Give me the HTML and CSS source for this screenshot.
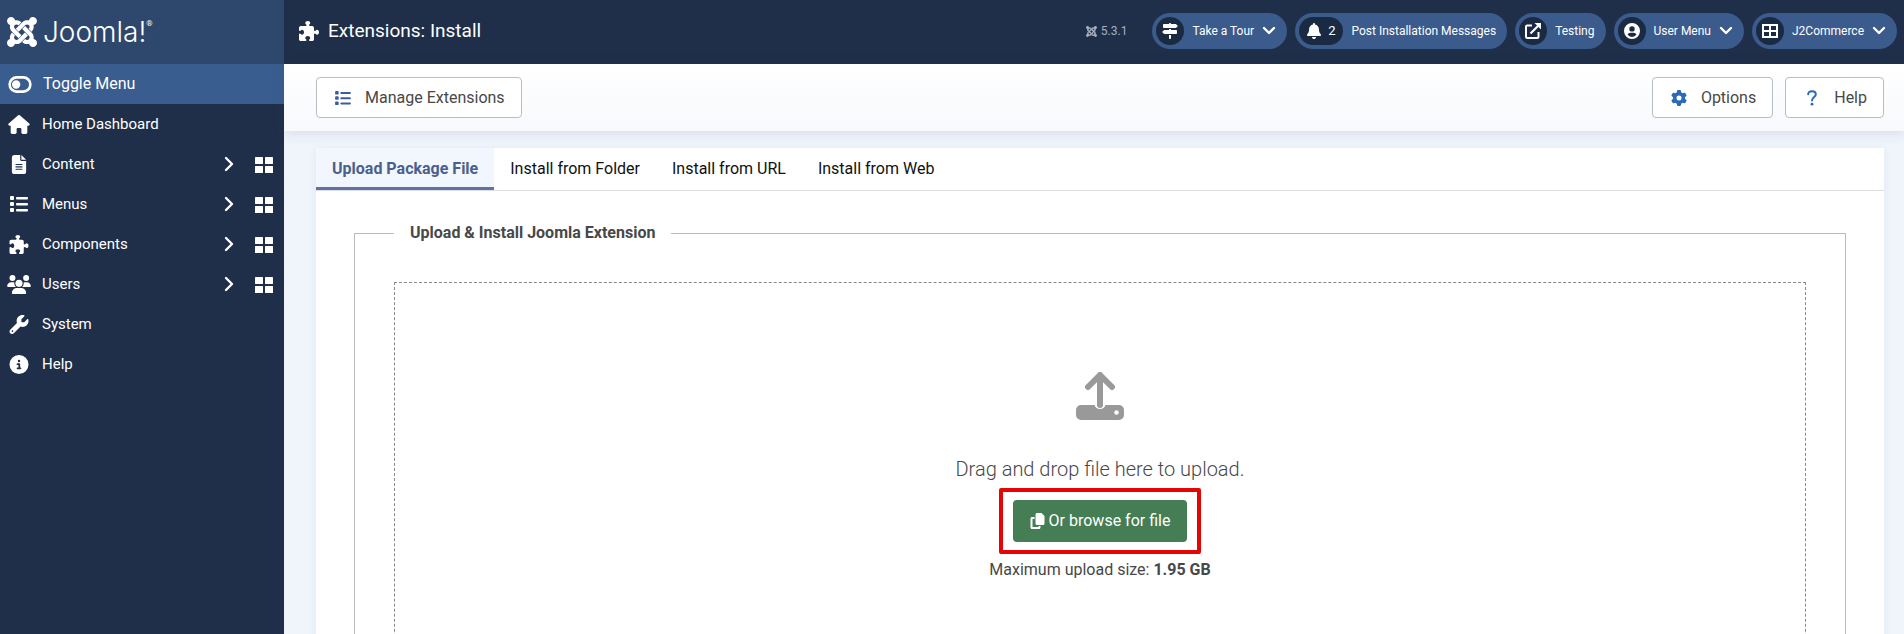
FILE: index.html
```html
<!DOCTYPE html>
<html lang="en">
<head>
<meta charset="utf-8">
<meta name="viewport" content="width=device-width, initial-scale=1">
<title>Extensions: Install</title>
<link rel="stylesheet" href="styles.css">
</head>
<body>
<svg class="sprite" aria-hidden="true">
  <symbol id="joomla" viewBox="0 32 448 448"><path d="M.6 92.1C.6 58.8 27.4 32 60.4 32c30 0 54.5 21.9 59.2 50.2 32.6-7.6 67.1.6 96.5 30l-44.3 44.3c-20.5-20.5-42.6-16.3-55.4-3.5-14.3 14.3-14.3 37.9 0 52.2l99.5 99.5-44 44.3c-87.7-87.2-49.7-49.7-99.8-99.7-26.8-26.5-35-64.8-24.8-98.9C20.4 144.6.6 120.7.6 92.1zm129.5 116.4l44.3 44.3c10-10 89.7-89.7 99.7-99.8 14.3-14.3 37.6-14.3 51.9 0 12.8 12.8 17 35-3.5 55.4l44 44.3c31.2-31.2 38.5-67.6 28.9-101.2 29.2-4.1 51.9-29.2 51.9-59.5 0-33.2-26.8-60.1-59.8-60.1-30.3 0-55.4 22.5-59.5 51.6-33.8-9.9-71.7-1.5-98.3 25.1-18.3 19.1-71.1 71.5-99.6 99.9zm266.3 152.2c8.2-32.7-.9-68.5-26.3-93.9-11.8-12.2 5 4.7-99.5-99.7l-44.3 44.3 99.7 99.7c14.3 14.3 14.3 37.6 0 51.9-12.8 12.8-35 17-55.4-3.5l-44 44.3c27.6 30.2 68 38.8 102.7 28 5.5 27.4 29.7 48.1 58.9 48.1 33 0 59.8-26.8 59.8-60.1 0-30.2-22.5-55-51.6-59.1zm-84.3-53.1l-44-44.3c-87 86.4-50.4 50.4-99.7 99.8-14.3 14.3-37.6 14.3-51.9 0-13.1-13.4-16.9-35.3 3.2-55.4l-44-44.3c-30.2 30.2-38 65.2-29.5 98.3-26.7 6-46.2 29.9-46.2 58.2C0 453.2 26.8 480 59.8 480c28.6 0 52.5-19.8 58.6-46.7 32.7 8.2 68.5-.6 94.2-26 32.1-32 12.2-12.4 99.5-99.7z"/></symbol>
  <symbol id="puzzle" viewBox="0 0 512 512"><path d="M192 104.8c0-9.2-5.8-17.3-13.2-22.8C167.2 73.3 160 61.3 160 48c0-26.5 28.7-48 64-48s64 21.5 64 48c0 13.3-7.2 25.3-18.8 34c-7.4 5.5-13.2 13.6-13.2 22.8c0 12.8 10.4 23.2 23.2 23.2H336c26.5 0 48 21.5 48 48v56.8c0 12.8 10.4 23.2 23.2 23.2c9.2 0 17.3-5.8 22.8-13.2c8.7-11.6 20.7-18.8 34-18.8c26.5 0 48 28.7 48 64s-21.5 64-48 64c-13.3 0-25.3-7.2-34-18.8c-5.5-7.4-13.6-13.2-22.8-13.2c-12.8 0-23.2 10.4-23.2 23.2V464c0 26.5-21.5 48-48 48H279.2c-12.8 0-23.2-10.4-23.2-23.2c0-9.2 5.8-17.3 13.2-22.8c11.6-8.7 18.8-20.7 18.8-34c0-26.5-28.7-48-64-48s-64 21.5-64 48c0 13.3 7.2 25.3 18.8 34c7.4 5.5 13.2 13.6 13.2 22.8c0 12.8-10.4 23.2-23.2 23.2H48c-26.5 0-48-21.5-48-48V343.2C0 330.4 10.4 320 23.2 320c9.2 0 17.3 5.8 22.8 13.2C54.7 344.8 66.7 352 80 352c26.5 0 48-28.7 48-64s-21.5-64-48-64c-13.3 0-25.3 7.2-34 18.8C40.5 250.2 32.4 256 23.2 256C10.4 256 0 245.6 0 232.8V176c0-26.5 21.5-48 48-48H168.8c12.8 0 23.2-10.4 23.2-23.2z"/></symbol>
  <symbol id="toggle" viewBox="0 0 22 16"><rect x="1.5" y="1.5" width="19" height="13" rx="6.5" fill="none" stroke="currentColor" stroke-width="2.4"/><circle cx="7.5" cy="8" r="3.8"/></symbol>
  <symbol id="home" viewBox="0 0 576 512"><path d="M575.8 255.5c0 18-15 32.1-32 32.1h-32l.7 160.2c0 2.7-.2 5.4-.5 8.1V472c0 22.1-17.9 40-40 40H392c-22.1 0-40-17.9-40-40V384c0-17.7-14.3-32-32-32H256c-17.7 0-32 14.3-32 32v88c0 22.1-17.9 40-40 40H104c-22.1 0-40-17.9-40-40V287.6H32c-18 0-32-14-32-32.1c0-9 3-17 10-24L266.4 8c7-7 15-8 22-8s15 2 21 7L564.8 231.5c8 7 12 15 11 24z"/></symbol>
  <symbol id="file" viewBox="0 0 384 512"><path d="M64 0C28.700 0 0 28.700 0 64V448c0 35.300 28.700 64 64 64H320c35.300 0 64-28.700 64-64V160H256c-17.700 0-32-14.300-32-32V0H64zM256 0V128H384L256 0zM112 240H272a16 16 0 0 1 0 32H112a16 16 0 0 1 0-32zm0 64H272a16 16 0 0 1 0 32H112a16 16 0 0 1 0-32zm0 64H272a16 16 0 0 1 0 32H112a16 16 0 0 1 0-32z"/></symbol>
  <symbol id="list" viewBox="0 0 18 16"><rect width="4" height="4" rx="1"/><rect y="6" width="4" height="4" rx="1"/><rect y="12" width="4" height="4" rx="1"/><rect x="6" y="1" width="12" height="2.400" rx="1"/><rect x="6" y="7" width="12" height="2.400" rx="1"/><rect x="6" y="13" width="12" height="2.400" rx="1"/></symbol>
  <symbol id="users" viewBox="0 0 640 512"><circle cx="144" cy="80" r="80"/><circle cx="512" cy="80" r="80"/><path d="M0 298.700C0 239.800 47.800 192 106.700 192h42.700c15.900 0 31 3.500 44.600 9.700A130 130 0 0 0 235.200 320H21.300C9.600 320 0 310.400 0 298.700zM405.300 320A130 130 0 0 0 446 201.700c13.600-6.300 28.700-9.700 44.600-9.700h42.700C592.200 192 640 239.800 640 298.700c0 11.800-9.600 21.300-21.300 21.300z"/><circle cx="320" cy="224" r="96"/><path d="M128 485.300C128 411.700 187.700 352 261.300 352h117.400C452.300 352 512 411.700 512 485.300c0 14.700-11.900 26.700-26.700 26.700H154.700C140 512 128 500.100 128 485.300z"/></symbol>
  <symbol id="wrench" viewBox="0 0 512 512"><path d="M352 320c88.400 0 160-71.600 160-160c0-15.300-2.200-30.100-6.200-44.200c-3.100-10.800-16.400-13.200-24.300-5.300l-76.800 76.800c-3 3-7.100 4.700-11.300 4.700H336c-8.800 0-16-7.200-16-16V118.600c0-4.200 1.700-8.300 4.700-11.300l76.800-76.800c7.900-7.900 5.400-21.200-5.300-24.300C382.100 2.200 367.300 0 352 0C263.600 0 192 71.600 192 160c0 19.100 3.400 37.500 9.500 54.500L19.900 396.100C7.200 408.800 0 426.100 0 444.100C0 481.600 30.400 512 67.900 512c18 0 35.300-7.200 48-19.900L297.500 310.500c17 6.200 35.400 9.500 54.500 9.500zM80 408a24 24 0 1 1 0 48 24 24 0 1 1 0-48z"/></symbol>
  <symbol id="info" viewBox="0 0 512 512"><path d="M256 512A256 256 0 1 0 256 0a256 256 0 1 0 0 512zM216 336h24V272H216c-13.300 0-24-10.700-24-24s10.700-24 24-24h48c13.300 0 24 10.700 24 24v88h8c13.300 0 24 10.700 24 24s-10.700 24-24 24H216c-13.300 0-24-10.700-24-24s10.700-24 24-24zm40-208a32 32 0 1 1 0 64 32 32 0 1 1 0-64z"/></symbol>
  <symbol id="right" viewBox="0 0 10 16"><path d="M2 2l6 6-6 6" fill="none" stroke="currentColor" stroke-width="2.400" stroke-linecap="round" stroke-linejoin="round"/></symbol>
  <symbol id="down" viewBox="0 0 14 10"><path d="M2 2l5 5 5-5" fill="none" stroke="currentColor" stroke-width="2.400" stroke-linecap="round" stroke-linejoin="round"/></symbol>
  <symbol id="grid" viewBox="0 0 18 16"><rect width="8" height="7" rx=".5"/><rect x="10" width="8" height="7" rx=".5"/><rect y="9" width="8" height="7" rx=".5"/><rect x="10" y="9" width="8" height="7" rx=".5"/></symbol>
  <symbol id="signs" viewBox="0 0 512 512"><path d="M224 32H64C46.300 32 32 46.300 32 64v64c0 17.700 14.300 32 32 32H441.400c4.200 0 8.300-1.700 11.300-4.700l48-48c6.200-6.200 6.200-16.400 0-22.600l-48-48c-3-3-7.100-4.700-11.300-4.700H288c0-17.700-14.300-32-32-32s-32 14.300-32 32zM480 256c0-17.700-14.300-32-32-32H288V192H224v32H70.600c-4.200 0-8.300 1.700-11.300 4.700l-48 48c-6.200 6.200-6.200 16.400 0 22.600l48 48c3 3 7.100 4.700 11.300 4.700H448c17.700 0 32-14.300 32-32V256zM288 480V384H224v96c0 17.700 14.300 32 32 32s32-14.300 32-32z"/></symbol>
  <symbol id="bell" viewBox="0 0 448 512"><path d="M224 0c-17.700 0-32 14.300-32 32V51.200C119 66 64 130.600 64 208v18.800c0 47-17.300 92.400-48.500 127.600l-7.400 8.300c-8.400 9.400-10.400 22.900-5.300 34.400S19.400 416 32 416H416c12.600 0 24-7.400 29.200-18.900s3.100-25-5.300-34.400l-7.400-8.300C401.300 319.200 384 273.900 384 226.800V208c0-77.400-55-142-128-156.800V32c0-17.700-14.300-32-32-32zm45.300 493.300c12-12 18.700-28.300 18.700-45.300H160c0 17 6.700 33.300 18.700 45.300s28.300 18.700 45.300 18.700s33.300-6.700 45.300-18.700z"/></symbol>
  <symbol id="external" viewBox="0 0 16 16"><path d="M7 2.500H2.200Q1 2.500 1 3.700v10.100Q1 15 2.200 15h10.100q1.200 0 1.200-1.200V9" fill="none" stroke="currentColor" stroke-width="2"/><path d="M5.500 10.500L13 3" fill="none" stroke="currentColor" stroke-width="2.200"/><path d="M9.500 0H16v6.500z"/></symbol>
  <symbol id="user" viewBox="0 0 16 16"><path fill-rule="evenodd" d="M8 0a8 8 0 1 1 0 16A8 8 0 0 1 8 0zm0 3.200a2.700 2.700 0 1 0 0 5.400 2.700 2.700 0 0 0 0-5.400zM3.500 11.600Q5 14 8 14t4.500-2.400Q11.500 9.700 9.800 9.700H6.200Q4.500 9.700 3.500 11.600z"/></symbol>
  <symbol id="table" viewBox="0 0 16 14"><path d="M1 1h14v12H1zM8 1v12M1 7h14" fill="none" stroke="currentColor" stroke-width="2"/></symbol>
  <symbol id="cog" viewBox="0 0 512 512"><path d="M495.900 166.600c3.200 8.700 .5 18.400-6.400 24.600l-43.300 39.400c1.100 8.300 1.700 16.800 1.700 25.400s-.6 17.100-1.700 25.400l43.300 39.400c6.900 6.200 9.600 15.900 6.400 24.600c-4.400 11.900-9.700 23.300-15.800 34.300l-4.700 8.100c-6.600 11-14 21.400-22.100 31.200c-5.900 7.200-15.700 9.600-24.500 6.800l-55.700-17.700c-13.400 10.300-28.200 18.900-44 25.400l-12.500 57.100c-2 9.100-9 16.300-18.200 17.800c-13.800 2.300-28 3.500-42.500 3.500s-28.700-1.200-42.500-3.500c-9.200-1.500-16.200-8.700-18.200-17.800l-12.500-57.100c-15.800-6.500-30.600-15.100-44-25.400L83.100 425.900c-8.800 2.800-18.600 .3-24.500-6.800c-8.100-9.800-15.500-20.200-22.100-31.200l-4.700-8.100c-6.100-11-11.400-22.400-15.800-34.300c-3.200-8.700-.5-18.400 6.400-24.600l43.300-39.400C64.600 273.100 64 264.600 64 256s.6-17.100 1.700-25.400L22.400 191.200c-6.900-6.200-9.600-15.900-6.400-24.600c4.400-11.900 9.700-23.300 15.800-34.300l4.700-8.100c6.600-11 14-21.400 22.100-31.200c5.900-7.200 15.700-9.600 24.500-6.800l55.700 17.700c13.400-10.300 28.200-18.900 44-25.400l12.500-57.100c2-9.100 9-16.300 18.200-17.800C227.300 1.200 241.500 0 256 0s28.700 1.200 42.500 3.500c9.200 1.500 16.200 8.700 18.200 17.800l12.500 57.100c15.800 6.500 30.600 15.100 44 25.400l55.700-17.700c8.800-2.800 18.600-.3 24.500 6.800c8.100 9.800 15.500 20.200 22.100 31.200l4.700 8.100c6.100 11 11.400 22.400 15.800 34.300zM256 336a80 80 0 1 0 0-160 80 80 0 1 0 0 160z"/></symbol>
  <symbol id="question" viewBox="0 0 10 16"><path d="M1.200 4.200C1.200 2.300 2.700 1.200 5 1.200S8.800 2.400 8.800 4.400C8.800 7 5 7 5 10.500" fill="none" stroke="currentColor" stroke-width="2" stroke-linecap="round"/><circle cx="5" cy="14.200" r="1.400"/></symbol>
  <symbol id="upload" viewBox="0 0 48 48"><path d="M5 33h13.500a5.800 5.800 0 0 0 11 0H43a5 5 0 0 1 5 5v5a5 5 0 0 1-5 5H5a5 5 0 0 1-5-5v-5a5 5 0 0 1 5-5zm35.500 5.200a2.300 2.300 0 1 0 0 4.600 2.300 2.300 0 0 0 0-4.600z"/><path d="M24 33V3M12 15L24 3l12 12" fill="none" stroke="currentColor" stroke-width="6" stroke-linecap="round" stroke-linejoin="round"/></symbol>
  <symbol id="copy" viewBox="0 0 448 512"><path d="M208 0H332.100c12.700 0 24.900 5.100 33.900 14.100l67.900 67.900c9 9 14.100 21.200 14.100 33.900V336c0 26.500-21.500 48-48 48H208c-26.500 0-48-21.500-48-48V48c0-26.500 21.500-48 48-48zM48 128h80v64H64V448H256V416h64v48c0 26.500-21.500 48-48 48H48c-26.500 0-48-21.500-48-48V176c0-26.500 21.500-48 48-48z"/></symbol>
</svg>

<div class="app">
  <aside class="sidebar">
    <a class="logo" href="#"><svg class="logo-mark"><use href="#joomla"/></svg><span class="wordmark">Joomla!</span><span class="reg">®</span></a>
    <button class="toggle" type="button"><svg class="menu-icon"><use href="#toggle"/></svg>Toggle Menu</button>
    <nav class="menu">
      <div class="item"><a class="link" href="#"><svg class="menu-icon"><use href="#home"/></svg>Home Dashboard</a></div>
      <div class="item"><a class="link" href="#"><svg class="menu-icon"><use href="#file"/></svg>Content<svg class="arrow"><use href="#right"/></svg></a><a class="dash" href="#" aria-label="Content Dashboard"><svg><use href="#grid"/></svg></a></div>
      <div class="item"><a class="link" href="#"><svg class="menu-icon menu-icon-list"><use href="#list"/></svg>Menus<svg class="arrow"><use href="#right"/></svg></a><a class="dash" href="#" aria-label="Menus Dashboard"><svg><use href="#grid"/></svg></a></div>
      <div class="item"><a class="link" href="#"><svg class="menu-icon"><use href="#puzzle"/></svg>Components<svg class="arrow"><use href="#right"/></svg></a><a class="dash" href="#" aria-label="Components Dashboard"><svg><use href="#grid"/></svg></a></div>
      <div class="item"><a class="link" href="#"><svg class="menu-icon"><use href="#users"/></svg>Users<svg class="arrow"><use href="#right"/></svg></a><a class="dash" href="#" aria-label="Users Dashboard"><svg><use href="#grid"/></svg></a></div>
      <div class="item"><a class="link" href="#"><svg class="menu-icon"><use href="#wrench"/></svg>System</a></div>
      <div class="item"><a class="link" href="#"><svg class="menu-icon"><use href="#info"/></svg>Help</a></div>
    </nav>
  </aside>

  <div class="page">
    <header class="header">
      <h1 class="title"><svg><use href="#puzzle"/></svg>Extensions: Install</h1>
      <span class="version"><svg><use href="#joomla"/></svg>5.3.1</span>
      <div class="pills">
        <button class="pill" type="button"><span class="badge"><svg><use href="#signs"/></svg></span>Take a Tour<svg class="caret"><use href="#down"/></svg></button>
        <a class="pill" href="#"><span class="badge badge-wide"><svg><use href="#bell"/></svg>2</span>Post Installation Messages</a>
        <a class="pill" href="#"><span class="badge"><svg><use href="#external"/></svg></span>Testing</a>
        <button class="pill" type="button"><span class="badge"><svg><use href="#user"/></svg></span>User Menu<svg class="caret"><use href="#down"/></svg></button>
        <button class="pill" type="button"><span class="badge"><svg><use href="#table"/></svg></span>J2Commerce<svg class="caret"><use href="#down"/></svg></button>
      </div>
    </header>

    <div class="toolbar">
      <button class="tool" type="button"><svg class="tool-list"><use href="#list"/></svg>Manage Extensions</button>
      <span class="spacer"></span>
      <button class="tool" type="button"><svg><use href="#cog"/></svg>Options</button>
      <button class="tool" type="button"><svg><use href="#question"/></svg>Help</button>
    </div>

    <main class="card">
      <div class="tabs" role="tablist">
        <button class="tab tab-active" type="button" role="tab" aria-selected="true">Upload Package File</button>
        <button class="tab" type="button" role="tab">Install from Folder</button>
        <button class="tab" type="button" role="tab">Install from URL</button>
        <button class="tab" type="button" role="tab">Install from Web</button>
      </div>
      <div class="panel">
        <fieldset class="options">
          <legend>Upload &amp; Install Joomla Extension</legend>
          <div class="dropzone">
            <svg class="upload"><use href="#upload"/></svg>
            <p class="lead">Drag and drop file here to upload.</p>
            <div class="highlight"><button class="browse" type="button"><svg><use href="#copy"/></svg>Or browse for file</button></div>
            <p class="limit">Maximum upload size: <strong>1.95 GB</strong></p>
          </div>
        </fieldset>
      </div>
    </main>
  </div>
</div>
</body>
</html>
```
FILE: styles.css
```css
* { box-sizing: border-box; }

body {
  margin: 0;
  font-family: Roboto, "Liberation Sans", sans-serif;
  font-size: 16px;
  line-height: 24px;
  color: #484848;
  background: #f0f4fb;
}

svg { fill: currentColor; flex: none; }
a { color: inherit; text-decoration: none; }
button { font: inherit; color: inherit; border: 0; background: none; cursor: pointer; }
.sprite { position: absolute; width: 0; height: 0; }

.app {
  display: grid;
  grid-template-columns: 284px 1fr;
  height: 100vh;
  overflow: hidden;
}

.sidebar { background: #1f2f49; color: #fff; }

.logo {
  display: flex;
  align-items: center;
  height: 64px;
  padding-left: 7px;
  background: #2e486d;
}
.logo-mark { width: 30px; height: 30px; }
.wordmark {
  margin-left: 6px;
  font-family: Inter, "DejaVu Sans", sans-serif;
  font-weight: 300;
  font-size: 28px;
}
.reg { align-self: flex-start; margin-top: 12px; font-size: 8px; }

.toggle {
  display: flex;
  align-items: center;
  gap: 11px;
  width: 100%;
  height: 40px;
  padding: 0 8px;
  background: #3a5d8f;
  text-align: left;
}
.menu-icon { width: 24px; height: 19px; }
.menu-icon-list { height: 16px; }
.item { display: flex; height: 40px; font-size: 15px; }
.link { display: flex; flex: 1; align-items: center; gap: 11px; padding: 0 21px 0 7px; }
.arrow { width: 10px; height: 16px; margin-left: auto; }
.dash { display: flex; align-items: center; padding: 2px 11px 0 0; }
.dash svg { width: 18px; height: 16px; }

.page { display: flex; flex-direction: column; min-width: 0; }

.header {
  display: flex;
  align-items: center;
  height: 64px;
  padding: 0 7px 2px 15px;
  background: #1f2f49;
  color: #fff;
  flex: none;
}
.title {
  display: flex;
  align-items: center;
  gap: 9px;
  margin: 0 auto 0 0;
  font-size: 19px;
  font-weight: 400;
}
.title svg { width: 20px; height: 20px; }
.version {
  display: flex;
  align-items: center;
  gap: 4px;
  margin-right: 25px;
  font-size: 12px;
  color: #a5afc0;
}
.version svg { width: 11px; height: 11px; }
.pills { display: flex; gap: 8px; }
.pill {
  display: flex;
  align-items: center;
  gap: 8px;
  height: 36px;
  padding: 0 11px 0 4px;
  border-radius: 18px;
  background: #3a5b8c;
  font-size: 12px;
  white-space: nowrap;
}
.badge {
  display: flex;
  align-items: center;
  justify-content: center;
  gap: 6px;
  min-width: 28px;
  height: 28px;
  border-radius: 14px;
  background: #1a2a43;
}
.badge svg { width: 16px; height: 16px; }
.badge-wide { padding: 0 8px 0 7px; font-size: 13px; }
.caret { width: 14px; height: 10px; }

.toolbar {
  display: flex;
  flex: none;
  gap: 12px;
  padding: 13px 20px 13px 32px;
  background: linear-gradient(#fff, #f7f9fc);
  box-shadow: 0 2px 12px rgba(50, 70, 120, .14);
}
.spacer { flex: 1; }
.tool {
  display: flex;
  align-items: center;
  gap: 12px;
  height: 41px;
  padding: 0 16px;
  border: 1px solid #b8bcc4;
  border-radius: 4px;
  background: #fff;
}
.tool svg { width: 20px; height: 16px; color: #2a69b8; }
.tool .tool-list { height: 14px; color: #3a5d9f; }

.card {
  margin: 17px 20px 0 32px;
  background: #fff;
  box-shadow: 0 2px 8px rgba(50, 70, 120, .08);
}
.tabs { display: flex; height: 43px; border-bottom: 1px solid #dcdee2; }
.tab { height: 42px; padding: 0 16px; color: #111; }
.tab-active {
  border-bottom: 3px solid #5d73a0;
  padding-top: 3px;
  background: #f2f6fe;
  color: #4b5f8c;
  font-weight: 700;
}
.panel { padding: 30px 38px 38px; }
.options { margin: 0; padding: 37px 39px 39px; border: 1px solid #b8bbc0; }
.options legend { padding: 0 16px; font-weight: 700; }

.dropzone {
  display: flex;
  flex-direction: column;
  align-items: center;
  padding: 89px 16px;
  border: 1px dashed #888;
}
.upload { width: 48px; height: 48px; color: #999; }
.lead { margin: 34px 0 0; font-size: 20px; font-weight: 300; line-height: 30px; }
.highlight {
  margin-top: 4px;
  padding: 8px 10px;
  border: 4px solid #e60505;
  border-radius: 2px;
}
.browse {
  display: flex;
  align-items: center;
  gap: 4px;
  height: 42px;
  padding: 0 17px;
  border-radius: 4px;
  background: #457d54;
  color: #fff;
}
.browse svg { width: 15px; height: 16px; }
.limit { margin: 4px 0 0; }
```
